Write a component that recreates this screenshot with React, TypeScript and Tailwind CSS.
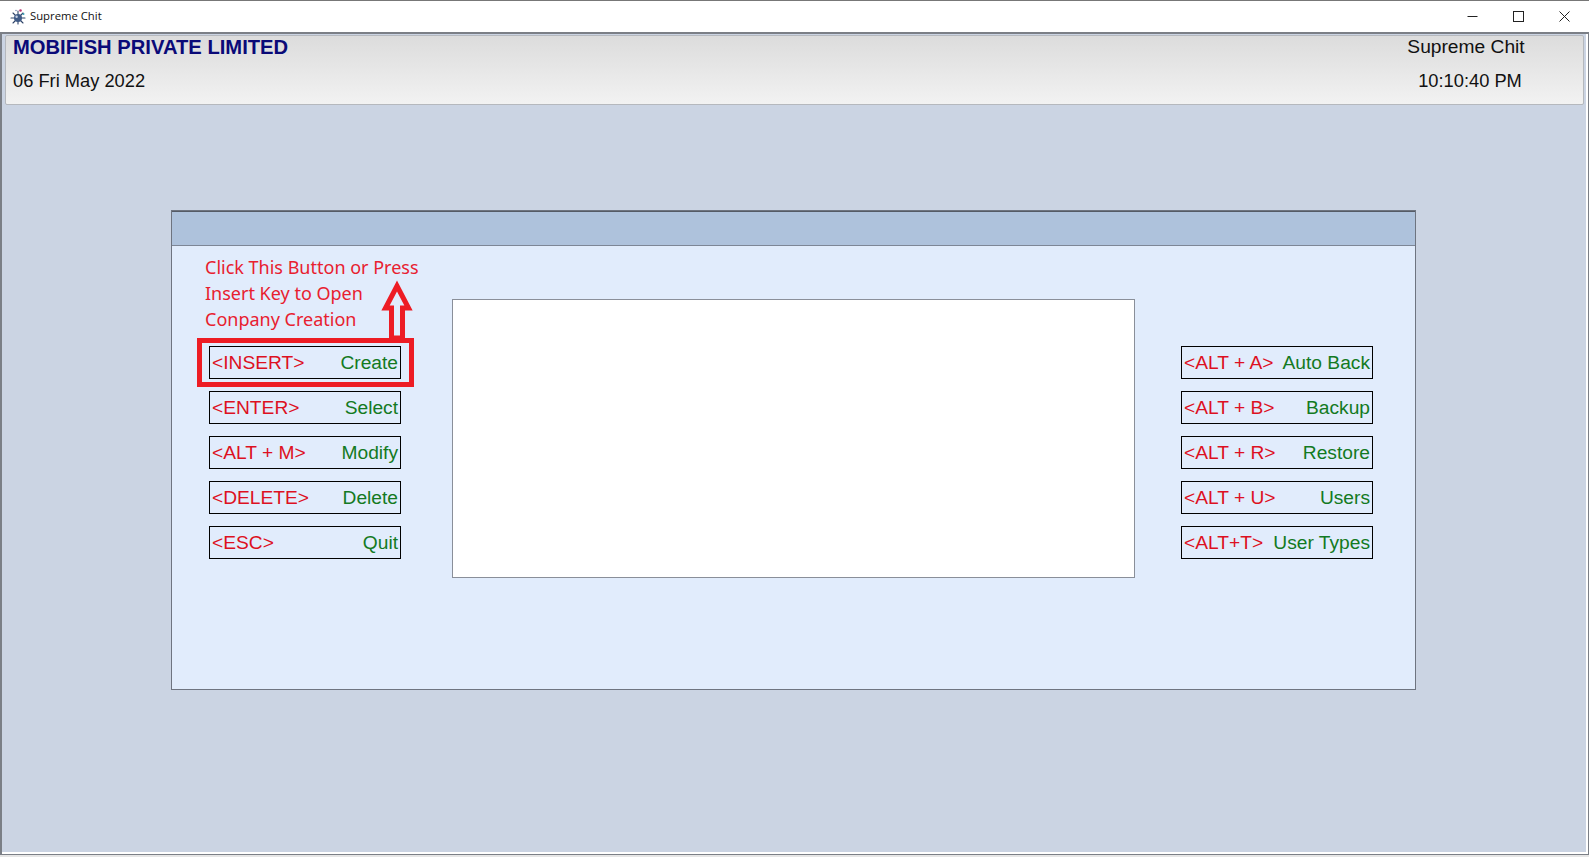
const leftKeys = [
  ['<INSERT>', 'Create'],
  ['<ENTER>', 'Select'],
  ['<ALT + M>', 'Modify'],
  ['<DELETE>', 'Delete'],
  ['<ESC>', 'Quit'],
];

const rightKeys = [
  ['<ALT + A>', 'Auto Back'],
  ['<ALT + B>', 'Backup'],
  ['<ALT + R>', 'Restore'],
  ['<ALT + U>', 'Users'],
  ['<ALT+T>', 'User Types'],
];

function AppIcon() {
  return (
    <svg width="18" height="18" viewBox="0 0 18 18" className="shrink-0">
      <g stroke="#2f4468" strokeWidth="1.1" strokeLinecap="round">
        <path d="M9 3v13M2 10h14M4 5l10 10M14 5L4 15" />
      </g>
      <circle cx="9" cy="10" r="4" fill="#3f5a86" />
      <circle cx="7.6" cy="8.8" r="1.2" fill="#c3d0e4" />
      <circle cx="11.5" cy="2.5" r="1.3" fill="#b8326e" />
      <circle cx="14.5" cy="6" r="1" fill="#3aa0b5" />
      <circle cx="7" cy="2.5" r="0.8" fill="#7a8db0" />
    </svg>
  );
}

function WindowControls() {
  return (
    <div className="flex items-center text-[#222]">
      <div className="flex h-[30px] w-[46px] items-center justify-center">
        <svg width="11" height="11" viewBox="0 0 11 11">
          <path d="M0.5 5.5h10" stroke="currentColor" fill="none" />
        </svg>
      </div>
      <div className="flex h-[30px] w-[46px] items-center justify-center">
        <svg width="11" height="11" viewBox="0 0 11 11">
          <rect x="0.5" y="0.5" width="10" height="10" stroke="currentColor" fill="none" />
        </svg>
      </div>
      <div className="flex h-[30px] w-[46px] items-center justify-center">
        <svg width="11" height="11" viewBox="0 0 11 11">
          <path d="M0.5 0.5l10 10M10.5 0.5l-10 10" stroke="currentColor" fill="none" />
        </svg>
      </div>
    </div>
  );
}

function KeyButton({ hotkey, label }: { hotkey: string; label: string }) {
  return (
    <div className="flex h-[33px] w-[192px] items-center justify-between whitespace-nowrap border border-black pl-[2px] pr-[2px] text-[19.2px] leading-none">
      <span className="text-[#dd1022]">{hotkey}</span>
      <span className="text-[#137a22]">{label}</span>
    </div>
  );
}

export default function App() {
  return (
    <div className="flex h-[857px] w-[1589px] flex-col overflow-hidden bg-[#e6e6e6] font-['Liberation_Sans',Arial,sans-serif]">
      <div className="flex h-[32px] shrink-0 items-center justify-between border-t border-[#777] bg-white pl-[9px] pr-[2px]">
        <div className="flex items-center gap-[3px] font-['Open_Sans',sans-serif] text-[11.3px] text-[#111]">
          <AppIcon />
          <span className="-mt-[1px]">Supreme Chit</span>
        </div>
        <WindowControls />
      </div>

      <div className="mb-[2px] flex flex-1 border-y border-r border-l-2 border-[#7b7f86] border-t-2">
        <div className="flex-1 border-r-2 border-b-2 border-white bg-[#cbd4e3] pl-[3px] pt-[1px]">
          <div className="flex h-[70px] w-[1579px] justify-between rounded-[2px] border border-[#b5b8bd] bg-gradient-to-b from-[#dcdcdc] to-[#f2f2f2] pl-[7px] text-[18.3px] leading-none">
            <div className="-mt-[1px] flex flex-col">
              <span className="text-[20.2px] font-bold leading-[24px] text-[#0a0a78]">MOBIFISH PRIVATE LIMITED</span>
              <span className="mt-[13px] text-[#111]">06 Fri May 2022</span>
            </div>
            <div className="-mt-[1px] flex w-[190px] flex-col items-center pr-[44px]">
              <span className="text-[19.2px] leading-[23px] text-[#111]">Supreme Chit</span>
              <span className="ml-[8px] mt-[14px] text-[#111]">10:10:40 PM</span>
            </div>
          </div>

          <div className="ml-[166px] mt-[105px] h-[480px] w-[1245px] border border-[#6e7480] bg-[#e1ecfc]">
            <div className="h-[35px] border-t border-b border-t-[#555b66] border-b-[#7d8696] bg-[#aec2dc]" />
            <div className="flex items-start pl-[37px]">
              <div className="flex w-[192px] flex-col">
                <div className="-ml-[4px] mt-[8px] h-[92px] w-[230px] font-['Noto_Sans',sans-serif] text-[18px] leading-[26px] text-[#e8202f]">
                  Click This Button or Press
                  <br />
                  Insert Key to Open
                  <br />
                  Conpany Creation
                </div>
                <div className="flex flex-col gap-[12px]">
                  {leftKeys.map(([hotkey, label], i) => (
                    <div key={hotkey} className="relative">
                      <KeyButton hotkey={hotkey} label={label} />
                      {i === 0 && (
                        <>
                          <div className="absolute -left-[12px] -right-[13px] -top-[8px] -bottom-[8px] border-[5px] border-[#ed1c24]" />
                          <svg
                            width="34"
                            height="60"
                            viewBox="0 0 34 60"
                            className="absolute -top-[67px] left-[171px]"
                          >
                            <path
                              d="M17 7L28.5 29H22.5V59H11.5V29H5.5Z"
                              fill="none"
                              stroke="#ed1c24"
                              strokeWidth="5"
                            />
                          </svg>
                        </>
                      )}
                    </div>
                  ))}
                </div>
              </div>

              <div className="ml-[51px] mt-[53px] h-[279px] w-[683px] border border-[#8a8f99] bg-white" />

              <div className="ml-[46px] mt-[100px] flex flex-col gap-[12px]">
                {rightKeys.map(([hotkey, label]) => (
                  <KeyButton key={hotkey} hotkey={hotkey} label={label} />
                ))}
              </div>
            </div>
          </div>
        </div>
      </div>
    </div>
  );
}
